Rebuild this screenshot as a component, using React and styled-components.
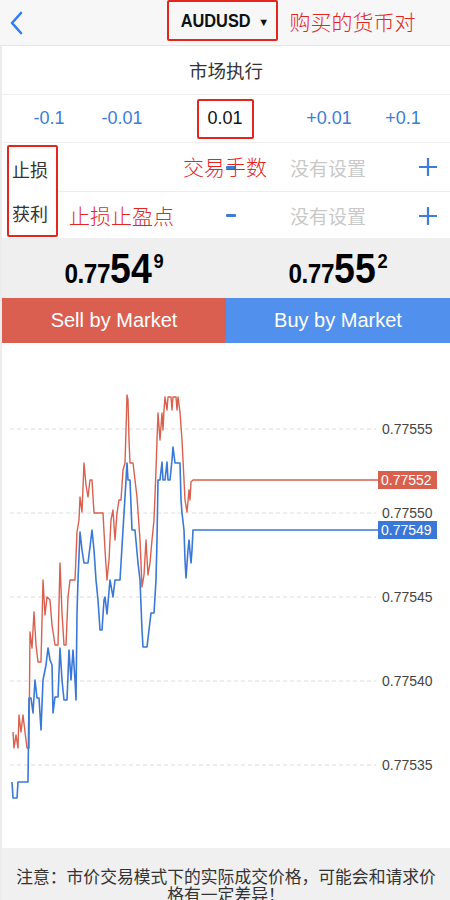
import React from "react";
import styled, { createGlobalStyle } from "styled-components";

const Global = createGlobalStyle`
  html, body { margin: 0; padding: 0; background: #fff; }
  body { font-family: "Liberation Sans", Arial, "Noto Sans CJK SC", sans-serif; }
  * { box-sizing: border-box; }
`;

const BLUE = "#3b7dd8";
const ANNO = "#e5261f";

const Page = styled.div`
  width: 450px;
  height: 900px;
  overflow: hidden;
  display: flex;
  flex-direction: column;
  background: #fff;
`;

const Header = styled.header`
  height: 47px;
  background: #f7f7f7;
  border-bottom: 1px solid #e4e4e4;
  display: grid;
  grid-template-columns: 1fr auto 1fr;
  align-items: center;
`;

const Back = styled.div`
  padding-left: 9px;
  display: flex;
  align-items: center;
`;

const Symbol = styled.div`
  width: 111px;
  height: 41px;
  margin-top: -4px;
  margin-left: -6px;
  border: 2px solid ${ANNO};
  border-radius: 2px;
  display: flex;
  align-items: center;
  justify-content: center;
  gap: 2px;
  color: #111;
`;

const SymbolText = styled.span`
  display: inline-block;
  font-weight: bold;
  font-size: 19px;
  transform: scaleX(0.86);
`;

const Caret = styled.span`
  font-size: 11px;
  margin-top: 2px;
`;

const HeaderNote = styled.div`
  padding-left: 12px;
  margin-top: -4px;
  color: ${ANNO};
  font-size: 21px;
  font-weight: 300;
  font-family: "Noto Sans CJK SC", sans-serif;
`;

const Body = styled.div`
  flex: 1;
  display: flex;
  flex-direction: column;
  border-left: 2px solid #ececec;
`;

const ModeRow = styled.div`
  height: 48px;
  display: flex;
  align-items: center;
  justify-content: center;
  font-family: "Noto Sans CJK SC", sans-serif;
  font-size: 18.5px;
  color: #333;
`;

const LotRow = styled.div`
  height: 48px;
  border-top: 1px solid #ededed;
  display: grid;
  grid-template-columns: 94px 52px 154px 54px 94px;
  align-items: center;
`;

const Step = styled.div`
  text-align: center;
  color: ${BLUE};
  font-size: 18px;
`;

const Lot = styled.div`
  justify-self: center;
  width: 57px;
  height: 40px;
  border: 2px solid ${ANNO};
  border-radius: 2px;
  display: flex;
  align-items: center;
  justify-content: center;
  font-size: 18px;
  color: #111;
`;

const StopSection = styled.div`
  border-top: 1px solid #ededed;
  display: grid;
  grid-template-columns: 56px 1fr;
  height: 96px;
`;

const LabelBox = styled.div`
  margin: 2px 0 2px 5px;
  border: 2px solid ${ANNO};
  border-radius: 2px;
  display: flex;
  flex-direction: column;
  justify-content: space-around;
  padding-left: 3px;
  font-family: "Noto Sans CJK SC", sans-serif;
  font-size: 18px;
  color: #333;
`;

const RowsCol = styled.div`
  display: flex;
  flex-direction: column;
`;

const StopRow = styled.div`
  position: relative;
  height: 48px;
  display: grid;
  grid-template-columns: 162px 22px 1fr 44px;
  align-items: center;
  border-top: ${(p) => (p.$sep ? "1px solid #ededed" : "none")};
`;

const Minus = styled.div`
  justify-self: center;
  width: 10px;
  height: 3px;
  background: ${BLUE};
  border-radius: 1px;
`;

const NotSet = styled.div`
  padding-left: 48px;
  font-family: "Noto Sans CJK SC", sans-serif;
  font-size: 19px;
  color: #c9c9c9;
`;

const Plus = styled.div`
  justify-self: center;
  display: flex;
`;

const Note = styled.div`
  position: absolute;
  left: ${(p) => p.$left}px;
  top: 50%;
  transform: translateY(-52%);
  color: ${ANNO};
  font-family: "Noto Sans CJK SC", sans-serif;
  font-size: 21px;
  font-weight: 300;
  line-height: 1;
  pointer-events: none;
`;

const Prices = styled.div`
  height: 60px;
  background: #efefef;
  display: grid;
  grid-template-columns: 1fr 1fr;
  align-items: center;
`;

const PriceCell = styled.div`
  display: flex;
  justify-content: center;
`;

const Price = styled.div`
  display: flex;
  align-items: baseline;
  font-weight: bold;
  color: #000;
  transform: scaleX(0.87);
`;

const PSmall = styled.span`
  font-size: 28px;
  line-height: 1;
  letter-spacing: -0.5px;
`;

const PBig = styled.span`
  font-size: 43px;
  line-height: 1;
`;

const PSup = styled.span`
  align-self: flex-start;
  font-size: 21px;
  line-height: 1;
  margin-top: 3px;
  margin-left: 2px;
`;

const Buttons = styled.div`
  height: 45px;
  display: grid;
  grid-template-columns: 1fr 1fr;
`;

const Btn = styled.div`
  background: ${(p) => p.$bg};
  color: #fff;
  font-size: 20px;
  display: flex;
  align-items: center;
  justify-content: center;
`;

const ChartWrap = styled.div`
  flex: 1;
  display: flex;
`;

const Footer = styled.footer`
  height: 52px;
  background: #f0f0f0;
  padding: 19px 10px 0;
  text-align: center;
  font-family: "Noto Sans CJK SC", sans-serif;
  font-size: 16.8px;
  line-height: 18px;
  color: #333;
`;

const redPts =
  "13,732 14,748 16,735 18,748 19,715 21,732 23,715 25,732 27,748 29,748 30,632 32,648 34,612 36,645 38,662 41,662 43,580 45,615 47,597 50,600 52,625 55,645 58,645 60,563 62,613 64,645 66,645 68,597 70,580 75,580 77,532 79,520 80,497 82,512 84,463 86,485 88,497 90,480 92,480 94,513 103,513 105,550 107,580 109,560 111,520 113,510 115,540 117,513 119,500 121,500 123,470 125,463 126,430 127,395 128,400 129,440 130,463 133,463 135,480 137,497 140,540 142,587 144,575 146,540 148,575 150,563 152,540 154,520 155,495 156,470 157,440 158,413 160,440 162,413 163,430 164,410 165,397 167,410 168,397 171,397 172,410 173,397 176,397 177,410 178,397 180,412 182,440 183,460 185,500 187,512 189,490 190,500 191,482 193,480 378,480";
const bluePts =
  "12,782 13,798 17,798 18,782 28,782 29,698 31,698 33,713 35,680 37,698 39,698 41,730 43,680 46,665 48,648 50,660 52,665 53,713 55,697 58,697 60,648 62,680 64,700 67,700 69,650 71,680 73,650 75,680 76,700 77,613 78,580 80,532 82,550 84,563 88,563 90,547 92,530 94,550 96,580 98,600 100,630 102,630 104,600 105,597 107,614 110,580 113,597 115,580 120,580 123,530 125,497 127,463 128,480 130,480 132,530 135,530 138,563 140,580 142,630 143,647 147,647 149,630 151,613 154,613 156,580 157,540 158,480 160,480 162,462 163,480 165,480 167,462 168,480 170,480 172,460 173,447 175,463 180,463 181,500 182,513 184,530 185,560 186,578 188,550 189,540 191,563 192,550 193,530 378,530";

const grid = [
  [429, "0.77555"],
  [513, "0.77550"],
  [597, "0.77545"],
  [681, "0.77540"],
  [765, "0.77535"],
];

function Chart() {
  return (
    <svg width="448" height="505" viewBox="2 343 448 505" style={{ display: "block" }}>
      {grid.map(([y]) => (
        <line key={y} x1="10" x2="376" y1={y} y2={y} stroke="#dedede" strokeWidth="1" strokeDasharray="4 3" />
      ))}
      <polyline points={redPts} fill="none" stroke="#d9604f" strokeWidth="1.4" strokeLinejoin="round" />
      <polyline points={bluePts} fill="none" stroke="#3a78d8" strokeWidth="1.6" strokeLinejoin="round" />
      {grid.map(([y, t]) => (
        <text key={t} x="382" y={y + 5} fontFamily="Liberation Sans, Arial, sans-serif" fontSize="14" fill="#444">
          {t}
        </text>
      ))}
      <rect x="378" y="471" width="59" height="18" fill="#d9604f" />
      <text x="381" y="485" fontFamily="Liberation Sans, Arial, sans-serif" fontSize="14" fill="#fff">0.77552</text>
      <rect x="378" y="521" width="59" height="18" fill="#3a78d8" />
      <text x="381" y="535" fontFamily="Liberation Sans, Arial, sans-serif" fontSize="14" fill="#fff">0.77549</text>
    </svg>
  );
}

function PriceDisplay({ lead, big, sup }) {
  return (
    <PriceCell>
      <Price>
        <PSmall>{lead}</PSmall>
        <PBig>{big}</PBig>
        <PSup>{sup}</PSup>
      </Price>
    </PriceCell>
  );
}

function PlusIcon() {
  return (
    <svg width="20" height="20" viewBox="0 0 20 20">
      <path d="M10 1v18M1 10h18" stroke={BLUE} strokeWidth="2.2" />
    </svg>
  );
}

export default function App() {
  return (
    <Page>
      <Global />
      <Header>
        <Back>
          <svg width="16" height="24" viewBox="0 0 16 24">
            <path d="M12 2L3 12l9 10" fill="none" stroke="#2f7cf6" strokeWidth="2.6" strokeLinecap="round" strokeLinejoin="round" />
          </svg>
        </Back>
        <Symbol>
          <SymbolText>AUDUSD</SymbolText>
          <Caret>▼</Caret>
        </Symbol>
        <HeaderNote>购买的货币对</HeaderNote>
      </Header>
      <Body>
        <ModeRow>市场执行</ModeRow>
        <LotRow>
          <Step>-0.1</Step>
          <Step>-0.01</Step>
          <Lot>0.01</Lot>
          <Step>+0.01</Step>
          <Step>+0.1</Step>
        </LotRow>
        <StopSection>
          <LabelBox>
            <span>止损</span>
            <span>获利</span>
          </LabelBox>
          <RowsCol>
            <StopRow>
              <span />
              <Minus />
              <NotSet>没有设置</NotSet>
              <Plus><PlusIcon /></Plus>
              <Note $left={125}>交易手数</Note>
            </StopRow>
            <StopRow $sep>
              <span />
              <Minus />
              <NotSet>没有设置</NotSet>
              <Plus><PlusIcon /></Plus>
              <Note $left={11}>止损止盈点</Note>
            </StopRow>
          </RowsCol>
        </StopSection>
        <Prices>
          <PriceDisplay lead="0.77" big="54" sup="9" />
          <PriceDisplay lead="0.77" big="55" sup="2" />
        </Prices>
        <Buttons>
          <Btn $bg="#db5f50">Sell by Market</Btn>
          <Btn $bg="#5290ee">Buy by Market</Btn>
        </Buttons>
        <ChartWrap>
          <Chart />
        </ChartWrap>
        <Footer>注意：市价交易模式下的实际成交价格，可能会和请求价格有一定差异！</Footer>
      </Body>
    </Page>
  );
}
